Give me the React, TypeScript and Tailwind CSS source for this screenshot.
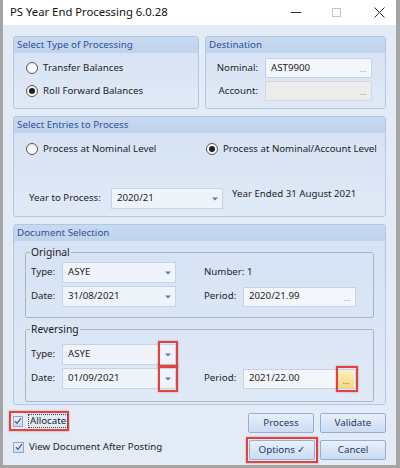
import type { ReactNode } from "react";

const font = "font-['Noto_Sans',sans-serif]";

function Group({
  title,
  className,
  children,
}: {
  title: string;
  className: string;
  children: ReactNode;
}) {
  return (
    <div
      className={`flex flex-col overflow-hidden rounded-[3px] border border-[#b2c7e3] bg-gradient-to-b from-[#d5e2f4] to-[#e0e9f6] ${className}`}
    >
      <div className="h-[16px] shrink-0 bg-gradient-to-b from-[#c7daf0] to-[#bfd3ec] pl-[3px] text-[9.8px] leading-[16px] text-[#2f5196]">
        {title}
      </div>
      {children}
    </div>
  );
}

function Radio({ checked, label }: { checked?: boolean; label: string }) {
  return (
    <div className="flex items-center gap-[5px]">
      <span className="flex h-[12px] w-[12px] items-center justify-center rounded-full border border-[#555] bg-gradient-to-b from-[#f4f4f4] to-white">
        {checked && <span className="h-[6px] w-[6px] rounded-full bg-[#1f1f1f]" />}
      </span>
      <span className="leading-[12px]">{label}</span>
    </div>
  );
}

function Arrow() {
  return (
    <svg width="6" height="4" viewBox="0 0 6 4">
      <path d="M0 0.5 L6 0.5 L3 3.5 Z" fill="#5a7bb4" />
    </svg>
  );
}

function Combo({
  value,
  w,
  mark,
}: {
  value: string;
  w: string;
  mark?: boolean;
}) {
  return (
    <div
      className={`relative flex h-[21px] items-center border border-[#c4d3e8] bg-[#eff4fb] ${w}`}
    >
      <span className="flex-1 pl-[5px]">{value}</span>
      <span className="flex w-[14px] justify-center">
        <Arrow />
      </span>
      {mark && (
        <span className="pointer-events-none absolute -bottom-[4px] -right-[3px] -top-[4px] w-[20px] border-2 border-[#e8403b] shadow-[0_0_2px_rgba(0,0,0,0.3)]" />
      )}
    </div>
  );
}

function Picker({
  value,
  w,
  disabled,
  mark,
}: {
  value: string;
  w: string;
  disabled?: boolean;
  mark?: boolean;
}) {
  return (
    <div
      className={`relative flex h-[20px] items-center border ${
        disabled ? "border-[#d2d8e0] bg-[#ececec]" : "border-[#c4d3e8] bg-[#f3f6fb]"
      } ${w}`}
    >
      <span className="flex-1 pl-[5px]">{value}</span>
      {mark ? (
        <span className="mr-[1px] flex h-[18px] w-[16px] items-end justify-center bg-gradient-to-b from-[#fdf0c2] to-[#f9d87c] pb-[3px] text-[8px] leading-[8px] text-[#6b5a2a]">
          ...
        </span>
      ) : (
        <span className="flex w-[16px] items-end justify-center self-end pb-[4px] text-[8px] leading-[8px] text-[#8a98ac]">
          ...
        </span>
      )}
      {mark && (
        <span className="pointer-events-none absolute -bottom-[4px] -right-[3px] -top-[4px] w-[22px] border-2 border-[#e8403b] shadow-[0_0_2px_rgba(0,0,0,0.3)]" />
      )}
    </div>
  );
}

function Check() {
  return (
    <span className="flex h-[11px] w-[11px] items-center justify-center border border-[#8ea6c8] bg-gradient-to-b from-[#eaf0f9] to-[#cfdcee]">
      <svg width="8" height="8" viewBox="0 0 8 8">
        <path d="M1 4.2 L3 6.3 L7 1.2" fill="none" stroke="#44618f" strokeWidth="1.3" />
      </svg>
    </span>
  );
}

function Btn({ children }: { children: ReactNode }) {
  return (
    <button className="flex h-[20px] w-[66px] items-center justify-center rounded-[2px] border border-[#94afd6] bg-gradient-to-b from-[#e8f0fb] to-[#cbdbf1] text-[9.8px] text-[#1f3a66]">
      {children}
    </button>
  );
}

function FieldSet({
  legend,
  className,
  children,
}: {
  legend: string;
  className: string;
  children: ReactNode;
}) {
  return (
    <fieldset
      className={`mx-[11px] rounded-[2px] border border-[#a9b5c5] pl-[4px] ${className}`}
    >
      <legend className="px-[1px] text-[10.3px] leading-[12px] text-[#222]">{legend}</legend>
      {children}
    </fieldset>
  );
}

export default function App() {
  return (
    <div
      className={`${font} flex h-[468px] w-[400px] flex-col border-b-[3px] border-l-[3px] border-r-[4px] border-[#a4a4a4] bg-[#e3ebf6] text-[9.7px] text-[#1e1e1e]`}
    >
      {/* title bar */}
      <div className="flex h-[25px] shrink-0 items-center bg-white pl-[7px]">
        <span className="flex-1 text-[11.3px] text-[#111]">PS Year End Processing 6.0.28</span>
        <div className="flex items-center">
          <span className="mr-[31px] h-[1px] w-[10px] bg-[#333]" />
          <span className="mr-[33px] h-[9px] w-[9px] border border-[#c4c4c4]" />
          <svg width="11" height="11" viewBox="0 0 11 11" className="mr-[11px]">
            <path d="M0.5 0.5 L10.5 10.5 M10.5 0.5 L0.5 10.5" stroke="#333" strokeWidth="1" />
          </svg>
        </div>
      </div>

      {/* body */}
      <div className="flex flex-1 flex-col px-[10px] pt-[11px]">
        <div className="flex h-[73px] gap-[6px]">
          <Group title="Select Type of Processing" className="w-[186px]">
            <div className="flex flex-col gap-[11px] pl-[12px] pt-[9px]">
              <Radio label="Transfer Balances" />
              <Radio checked label="Roll Forward Balances" />
            </div>
          </Group>
          <Group title="Destination" className="w-[181px]">
            <div className="flex flex-col gap-[3px] pt-[5px]">
              <div className="flex items-center gap-[7px]">
                <span className="w-[52px] text-right">Nominal:</span>
                <Picker value="AST9900" w="w-[107px]" />
              </div>
              <div className="flex items-center gap-[7px]">
                <span className="w-[52px] text-right">Account:</span>
                <Picker value="" w="w-[107px]" disabled />
              </div>
            </div>
          </Group>
        </div>

        <Group title="Select Entries to Process" className="mt-[7px] h-[101px]">
          <div className="flex pl-[12px] pt-[10px]">
            <div className="w-[180px]">
              <Radio label="Process at Nominal Level" />
            </div>
            <Radio checked label="Process at Nominal/Account Level" />
          </div>
          <div className="mt-[33px] flex items-center pl-[15px]">
            <span className="w-[82px]">Year to Process:</span>
            <Combo value="2020/21" w="w-[112px]" />
            <span className="ml-[9px] -mt-[8px]">Year Ended 31 August 2021</span>
          </div>
        </Group>

        <Group title="Document Selection" className="mt-[7px] h-[181px]">
          <FieldSet legend="Original" className="mt-[5px] h-[72px]">
            <div className="mt-[4px] flex flex-col gap-[3px]">
              <div className="flex items-center">
                <span className="w-[32px] pl-[1px]">Type:</span>
                <Combo value="ASYE" w="w-[114px]" />
                <span className="ml-[28px]">Number: 1</span>
              </div>
              <div className="flex items-center">
                <span className="w-[32px] pl-[1px]">Date:</span>
                <Combo value="31/08/2021" w="w-[114px]" />
                <span className="ml-[28px] w-[39px]">Period:</span>
                <Picker value="2020/21.99" w="w-[113px]" />
              </div>
            </div>
          </FieldSet>
          <FieldSet legend="Reversing" className="mt-[5px] h-[79px]">
            <div className="mt-[9px] flex flex-col gap-[3px]">
              <div className="flex items-center">
                <span className="w-[32px] pl-[1px]">Type:</span>
                <Combo value="ASYE" w="w-[114px]" mark />
              </div>
              <div className="flex items-center">
                <span className="w-[32px] pl-[1px]">Date:</span>
                <Combo value="01/09/2021" w="w-[114px]" mark />
                <span className="ml-[28px] w-[39px]">Period:</span>
                <Picker value="2021/22.00" w="w-[113px]" mark />
              </div>
            </div>
          </FieldSet>
        </Group>

        <div className="flex flex-1">
          <div className="flex flex-1 flex-col">
            <div className="-ml-[4px] mt-[6px] flex h-[20px] w-[60px] items-center gap-[5px] border-2 border-[#e8403b] pl-[2px] shadow-[0_0_2px_rgba(0,0,0,0.3)]">
              <Check />
              <span className="border border-dotted border-[#444] px-[1px] leading-[12px]">Allocate</span>
            </div>
            <div className="mt-[9px] flex items-center gap-[5px]">
              <Check />
              <span>View Document After Posting</span>
            </div>
          </div>
          <div className="flex flex-col items-end pt-[8px]">
            <div className="flex gap-[6px]">
              <Btn>Process</Btn>
              <Btn>Validate</Btn>
            </div>
            <div className="mt-[4px] flex items-center">
              <div className="border-2 border-[#e8403b] p-[1px] shadow-[0_0_2px_rgba(0,0,0,0.3)]">
                <Btn>Options ✓</Btn>
              </div>
              <div className="ml-[2px]">
                <Btn>Cancel</Btn>
              </div>
            </div>
          </div>
        </div>
      </div>
    </div>
  );
}
